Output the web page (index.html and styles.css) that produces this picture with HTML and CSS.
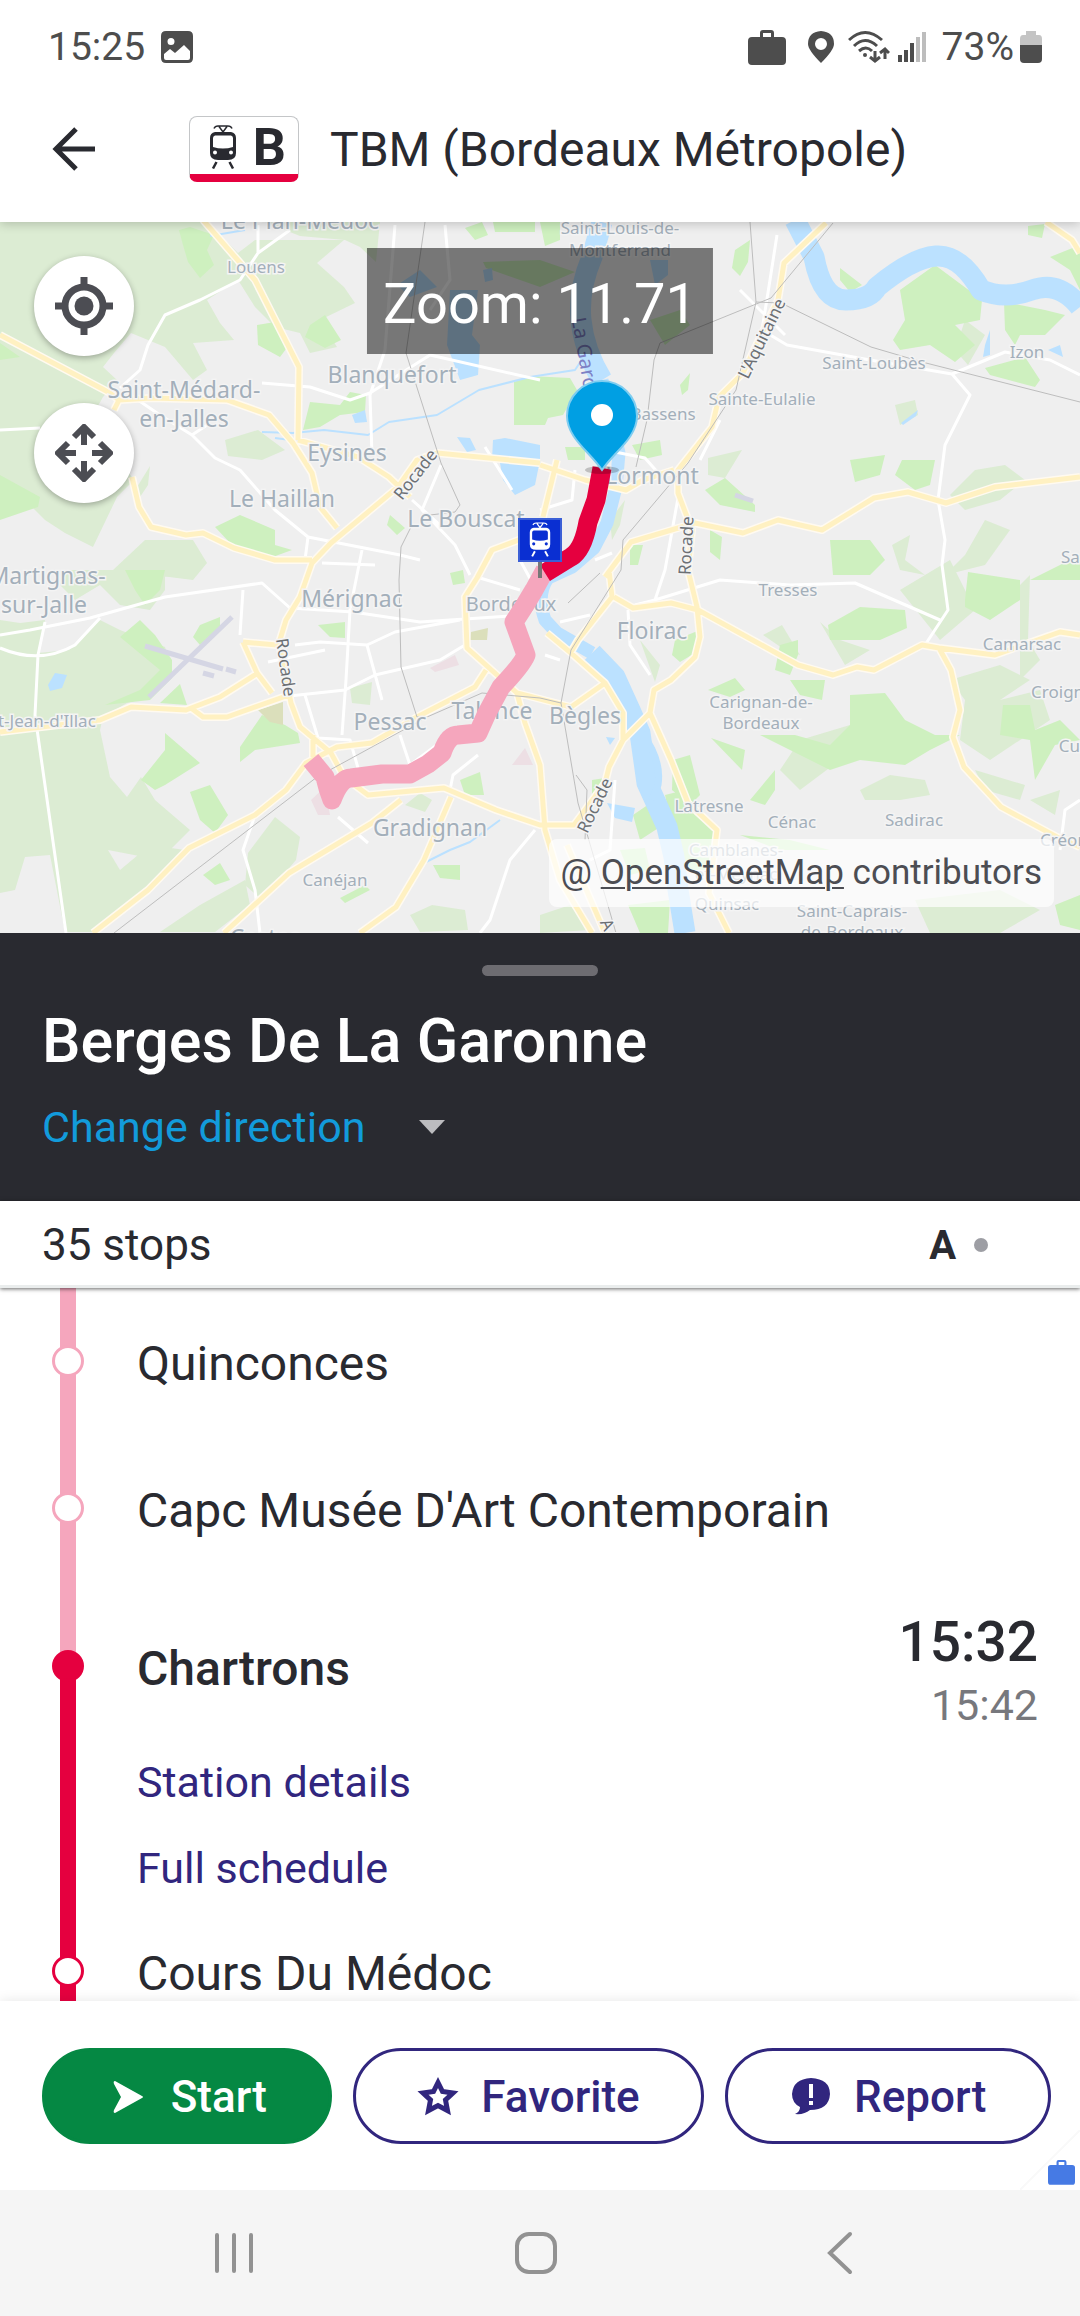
FILE: index.html
```html
<!DOCTYPE html>
<html lang="en">
<head>
    <meta charset="UTF-8">
    <meta name="viewport" content="width=device-width, initial-scale=1.0">
    <title>TBM (Bordeaux Métropole) - Line B</title>
    <link rel="stylesheet" href="styles.css">
</head>
<body>

    <!-- Shared shapes -->
    <svg class="sprite" aria-hidden="true">
        <symbol id="tram" viewBox="0 0 28 44">
            <path d="M5 3.500Q6 1 9 1H19Q22 1 23 3.500M10 1.500L14 7 18 1.500" fill="none" stroke="currentColor" stroke-width="1.500"/>
            <path fill="currentColor" fill-rule="evenodd" d="M6 7H22Q27 8 27 13V28Q27 35 19 35H9Q1 35 1 28V13Q1 8 6 7ZM6 10.500Q4 11 4 13V22Q14 25 24 22V13Q24 11 22 10.500ZM6 25.500A2 2 0 1 0 6 29.500 2 2 0 1 0 6 25.500ZM22 25.500A2 2 0 1 0 22 29.500 2 2 0 1 0 22 25.500Z"/>
            <path d="M7.500 37L4 43.500M20.500 37L24 43.500" stroke="currentColor" stroke-width="2.500"/>
        </symbol>
        <symbol id="briefcase" viewBox="0 0 38 36">
            <path fill="currentColor" fill-rule="evenodd" d="M4 8H12V4Q12 1 15 1H23Q26 1 26 4V8H34Q38 8 38 12V32Q38 36 34 36H4Q0 36 0 32V12Q0 8 4 8ZM15 8H23V4H15Z"/>
        </symbol>
    </svg>

    <header class="top">
        <div class="status-bar">
            <span>15:25</span>
            <svg class="picture-icon" viewBox="0 0 32 32"><path fill="currentColor" fill-rule="evenodd" d="M5 0H27Q32 0 32 5V27Q32 32 27 32H5Q0 32 0 27V5Q0 0 5 0ZM10 7A3.500 3.500 0 1 0 10 14 3.500 3.500 0 1 0 10 7ZM3 23V27Q3 29 5 29H27Q29 29 29 27V20L23 14 14 22 9 18Z"/></svg>
            <div class="status-right">
                <svg class="work-icon"><use href="#briefcase"/></svg>
                <svg class="place-icon" viewBox="0 0 26 32"><path fill="currentColor" fill-rule="evenodd" d="M13 0Q26 1 26 13 26 19 13 32 0 19 0 13 0 1 13 0ZM13 7A6 6 0 1 0 13 19 6 6 0 1 0 13 7Z"/></svg>
                <svg class="wifi-icon" viewBox="0 0 42 34"><g fill="none" stroke="currentColor" stroke-width="3"><path d="M1 10Q17-5 34 10M6 16Q17 5 29 16M11 21Q18 15 24 21M27 21V31M22 27L27 31 32 27M37 29V19M32 23L37 19 41 23"/></g><circle cx="17" cy="25" r="2" fill="currentColor"/></svg>
                <svg class="signal-icon" viewBox="0 0 28 32"><path d="M2 24V31M8 19V31M14 12V31" stroke="currentColor" stroke-width="4"/><path d="M20 6V31M26 1V31" stroke="#bdbdbd" stroke-width="4"/></svg>
                <span>73%</span>
                <svg class="battery-icon" viewBox="0 0 22 32"><path d="M6 0H16V4H19Q22 4 22 8V14H0V8Q0 4 3 4H6Z" fill="#c4c4c4"/><path d="M0 14H22V28Q22 32 18 32H4Q0 32 0 28Z" fill="currentColor"/></svg>
            </div>
        </div>
        <div class="title-bar">
            <button class="back" aria-label="Back">
                <svg viewBox="0 0 44 44"><path d="M43 22H4M24 2L4 22 24 42" fill="none" stroke="currentColor" stroke-width="5"/></svg>
            </button>
            <div class="line-badge">
                <svg><use href="#tram"/></svg>
                <b>B</b>
            </div>
            <h1>TBM (Bordeaux Métropole)</h1>
        </div>
    </header>

    <section class="map">
        <svg class="map-canvas" viewBox="0 222 1080 711" preserveAspectRatio="xMidYMid slice">
            <!-- Woods -->
            <path class="wood" d="M0 222H207L238 253 255 240 344 240 317 263 344 287 355 303 320 320 337 347 310 353 300 333 275 327 255 307 238 280 207 300 220 323 234 340 193 343 207 370 193 380 165 347 131 333 114 353 103 367 117 380 103 397 90 420 134 480 117 497 93 547 65 533 45 520 25 500 0 480ZM265 222H380L376 262 360 247 345 240 300 236ZM225 440L258 430 285 450 262 460 228 456ZM134 492L150 466 148 485 138 500ZM0 620L20 623 45 620 38 653 69 650 100 620 120 630 165 647 172 670 148 697 127 703 103 717 100 730 110 777 127 797 141 777 155 800 190 830 160 860 108 850 120 870 150 845 185 850 148 890 120 910 93 932 65 932 50 855 25 857 15 890 0 893ZM248 853L275 817 300 837 296 860 262 900 245 885ZM160 932L200 905 245 880 250 905 215 932ZM65 570H165V590L150 610 120 605 100 585 75 600 60 585ZM113 570L145 540 193 540 207 563 193 580ZM405 805L420 793 432 800 425 812ZM410 915L432 905 465 910 468 930 420 932ZM350 688L372 682 370 705 352 703Z"/>
            <path class="wood" d="M950 495L975 470 1005 465 1025 480 1000 500 965 510ZM965 555L985 520 1010 530 985 565 945 575ZM892 545L910 535 905 560 925 575 900 570ZM905 300L930 297 935 315 910 318ZM965 320L985 335 968 365 955 350ZM895 405L915 400 918 415 900 425ZM950 680L1000 665 1030 680 1000 700 1040 690 1050 720 990 760 960 740 965 700ZM860 790L890 775 925 780 930 795 900 800 865 800ZM975 770L1025 785 1020 800 985 790ZM1030 800L1060 790 1055 815ZM915 900L1000 890 1040 910 1000 933 930 933ZM763 635L782 625 800 655 785 650ZM640 640L660 665 655 682ZM820 622L840 640 870 650 845 665ZM780 770L800 740 850 725 840 760 800 790ZM1020 585L1030 575 1028 640 1040 660 1020 680ZM708 458L742 450 725 478 708 475ZM610 520L625 500 620 525 612 540ZM540 915L570 905 590 930 540 933ZM900 590L950 560 975 610 940 640Z"/>
            <!-- Parks -->
            <path class="park" d="M179 230L190 227 214 235 207 250 214 265 200 278 188 262 183 245ZM483 262L540 260 575 272 540 287 486 268ZM465 228L482 222 488 235 475 240ZM493 222H535V232H495ZM540 222H560V240L545 246ZM257 325L275 322 289 345 280 357 258 345ZM310 325L325 315 341 340 325 348 305 337ZM303 430L310 402 340 405 350 392 366 395 365 412 340 415 320 427ZM514 382L530 376 570 378 577 390 563 415 548 418 545 425 514 425ZM215 527L240 515 275 530 275 545 292 550 270 558 230 543ZM0 475L40 497 38 507 0 520ZM0 343L20 357 0 360ZM390 515L405 528 397 535 387 525ZM735 250L750 240 748 262 740 276 732 268ZM840 268L862 285 850 292 840 280ZM900 290L935 265 982 300 980 320 955 325 975 345 955 362 930 345 900 350 893 340 905 320ZM1004 302L1045 310 1065 315 1045 335 1020 335 1015 345 1005 330ZM1050 257L1080 245V290L1070 270ZM1028 226L1045 224 1042 238 1028 235ZM985 368L1025 357 1040 380 1035 387 990 375ZM680 385L690 373 688 390 682 395ZM705 490L725 478 755 505 755 512 720 505ZM850 460L885 455 880 475 855 482ZM902 460L935 460 930 485 915 490 895 475ZM632 445L660 440 662 455 640 460ZM830 540L870 540 885 560 870 575 833 575ZM1030 580L1080 555V580ZM710 530L722 537 720 560 710 552ZM630 545H643L638 565H630ZM650 320L680 310 690 325 665 345ZM565 447H585V460H568Z"/>
            <path class="park" d="M120 637L140 620 155 635 172 660 172 678 150 700 105 705 140 690 160 670ZM193 637L200 625 220 617 220 627 200 645ZM160 703L180 684 187 705ZM240 747L262 715 285 725 298 733 300 743 255 750 240 762ZM141 780L165 750 165 733 200 763 165 785 155 790ZM190 792L210 785 228 815 215 833 200 820ZM460 780L480 772 484 795 465 795ZM203 875L220 863 230 880 215 885ZM433 865L460 865 460 880 440 878ZM340 898L365 885 370 890 345 903ZM125 570H165L160 590 145 605 135 590ZM318 625L345 622 345 638 330 637ZM450 573L463 570 465 583 453 585ZM675 640L700 630 700 650 680 662 672 655ZM828 625L860 607 905 610 907 628 880 640 830 640ZM965 600L968 572 1020 580 1020 600 990 620 965 607ZM780 645L798 640 798 655 790 675 775 670ZM708 690L735 678 745 690 730 697ZM790 680L825 680 822 700 800 695ZM850 695L885 693 905 720 935 735 960 735 930 750 905 765 860 760 830 770 760 735 795 735 830 745 850 725ZM750 800L775 770 775 790 765 805ZM1003 705L1030 705 1035 730 1060 720 1080 740 1055 745 1035 780 1030 740 1000 735ZM711 738L745 750 742 770ZM673 760L690 755 700 795 690 805 672 790ZM665 795L685 790 695 815 715 830 715 870 690 870 675 840ZM633 815L655 800 663 825 640 840ZM628 905L670 900 668 933 640 933ZM1055 905L1080 895V930L1060 925ZM740 835L790 840 830 850 780 850ZM592 780L605 778 600 805 592 800ZM620 850L645 848 650 870 630 875Z"/>
            <path class="quarter" d="M430 668L455 655 459 665 435 672ZM311 800L325 787 330 815 318 815ZM512 765L525 748 533 765Z"/>
            <path class="field" d="M471 632L488 628 487 640 470 640ZM258 710L283 702 283 725 270 722Z"/>
            <path class="runway" d="M145 646L223 669M149 697L232 617M226 669L236 672M203 673L214 676M735 495L753 501"/>

            <!-- Water -->
            <path class="river wide" d="M795 220L814 257Q822 300 846 300T877 287Q912 258 936 256T981 290Q1005 300 1032 290T1080 307"/>
            <path class="river wide" d="M602 222L592 257Q578 290 581 320T602 380"/>
            <path class="river" d="M602 380L619 453 616 487 607 523 594 548 572 567 548 578Q536 595 545 620L557 633 592 653"/>
            <path class="river wide" d="M592 653L615 677 630 710 640 733 647 783 667 827 674 857 678 890 685 933"/>
            <path class="stream wide" d="M642 733Q662 760 658 785L652 800"/>
            <path class="stream" d="M262 432L293 433 324 430 368 435 389 422 437 415 479 390 530 377 575 370 585 355M426 862L450 850 470 842 500 820M210 236L245 230M275 438L290 440"/>
            <path class="water" d="M450 290H478L472 335 480 345 478 375 460 380 447 345ZM397 285L420 270 437 287 410 297ZM483 270L492 268 493 280 485 282ZM493 440L505 438 540 445 540 460 535 485 515 495 503 480 500 463 492 460ZM457 437L470 438 476 450 467 452ZM352 415L365 410 367 422 355 423ZM48 685L55 673 67 675 62 688 50 691ZM607 803L635 808 632 822 615 818ZM985 345L990 330 990 355 983 357ZM1048 350L1060 345 1063 357ZM901 423L918 410 916 416 903 425ZM606 737L615 738 610 745ZM650 260H668V275L655 285Z"/>

            <!-- Small roads -->
            <path class="street" d="M258 225L258 253 240 280 200 300 165 315 148 345 140 370 120 388M258 253L290 230M395 225L385 350 370 395 372 455M445 225L450 280 430 310M262 383L310 387 350 400 370 393 430 355 540 380M0 430L40 428M135 398L160 415 192 435 215 458 240 470 275 510 308 537 400 555 420 560M192 435L207 425M308 537L305 560M322 563L375 565M362 550L358 570 350 610 346 680 342 735M441 465L422 510 455 545 470 575M485 447L512 490"/>
            <path class="street" d="M0 635L30 630 90 618 165 597 262 583 290 608 353 612 420 622 510 616M0 648Q40 665 75 645L100 618M45 622L38 655 35 715 66 933M243 590L240 635M295 645L320 642 367 645 395 632 460 620M268 662L325 650M280 697L345 690 375 675 440 660 465 645M367 645L382 700M305 695L318 738 350 740 360 775M400 735L410 765 450 735M255 815L243 850 255 890 260 933M338 817L368 843M478 755L453 775 450 790M535 830L510 860 490 920 480 933M480 578L520 590M412 500L440 525M540 597L520 560"/>
            <path class="street" d="M777 235L770 280 762 330 787 345 870 360 952 374M952 374L970 395 945 445 938 500 945 540 942 565 948 610 925 645M952 374L1005 352 1050 360 1080 375M678 498L665 570 655 600 635 605M595 560L612 553M655 600L720 580 790 585 855 583 940 620M628 610L630 645 650 675M1080 800L1065 810 1060 850M700 460L720 420M605 450L645 458 660 475M560 622L590 615M615 780L610 850 590 860M545 655L560 660M740 290L785 335M540 510L572 500 575 470"/>

            <!-- Main roads -->
            <g class="road-casing"><use href="#main-roads"/></g>
            <g class="road"><path id="main-roads" d="M203 220L255 280 299 367 298 440M0 335L110 393 119 400 114 410M132 477L139 507 151 527 186 535 203 533 234 548 275 560 312 560M119 400L151 398 227 400 269 415 293 443 312 473 320 507 337 528M298 440L358 457 389 477 410 497M540 463L437 453 417 460 398 487 331 543 312 563 300 597 286 620 279 643 291 703 300 727 331 753 344 777 368 795 444 788 496 810 540 825 574 825 605 783 609 767 623 740 650 713 654 690 671 680 695 657 700 637 697 607 688 570 692 530 678 493 678 470 712 427 719 397 743 373 778 300 784 263 826 223M605 577L631 542 695 523 743 533 778 520 822 530 874 498 908 492 946 503 995 487 1080 477M614 597L633 608 671 603 698 610 798 665 833 675 857 667 874 670 922 645 939 648 995 655 1060 632 1080 635M939 648L951 670 960 710 953 737 964 767 1001 807 1057 837 1080 847M650 713L671 760 688 803 717 830 709 893 729 933M0 732L100 720 131 707 186 710 220 697 258 673 M243 642L257 673 272 693M243 642L277 645M191 708L203 717 227 717 289 695M93 933L148 890 189 848 255 815 286 790 306 763 337 747 372 743 417 717 475 687 486 670M313 757V735M224 933L289 873 372 823 401 800M360 933L396 907 424 860 451 797M540 532L492 550 477 578 465 597 467 648 517 693 525 723 540 765 545 830 560 880 592 933M547 633L571 653 605 683 623 713 623 740M605 683L571 707 517 693M540 465L585 480 626 490 643 480 674 470M557 460L543 517M1046 222L1072 240 1080 253M609 570L612 597 578 640 571 652M567 845L605 933"/></g>

            <!-- Railways -->
            <path class="rail" d="M425 222L406 353 441 463 460 505 455 512 430 515M412 525L401 547 399 580 401 667 417 717 427 717M114 933L317 777 427 717 482 693 540 698 561 703M750 222L756 302 736 390 688 463 623 540 621 570 571 650 561 703 578 803 616 933M833 223L771 298 660 343 654 360 647 420 636 467M756 302L781 303 871 347 922 362 1080 402M576 775L587 790 585 840M568 603L600 573"/>

            <!-- Place names -->
            <g class="town">
                <text x="300" y="229">Le Plan-Médoc</text>
                <text x="184" y="398">Saint-Médard-</text>
                <text x="184" y="427">en-Jalles</text>
                <text x="392" y="383">Blanquefort</text>
                <text x="347" y="461">Eysines</text>
                <text x="282" y="507">Le Haillan</text>
                <text x="466" y="527">Le Bouscat</text>
                <text x="47" y="584">Martignas-</text>
                <text x="44" y="613">sur-Jalle</text>
                <text x="352" y="607">Mérignac</text>
                <text x="390" y="730">Pessac</text>
                <text x="492" y="719">Talence</text>
                <text x="430" y="836">Gradignan</text>
                <text x="652" y="484">Lormont</text>
                <text x="652" y="639">Floirac</text>
                <text x="585" y="724">Bègles</text>
                <text x="265" y="946">Cestas</text>
            </g>
            <g class="city">
                <text x="511" y="611">Bordeaux</text>
            </g>
            <g class="village">
                <text x="256" y="273">Louens</text>
                <text x="30" y="727">Saint-Jean-d'Illac</text>
                <text x="335" y="886">Canéjan</text>
                <text x="620" y="234">Saint-Louis-de-</text>
                <text x="620" y="256">Montferrand</text>
                <text x="663" y="420">Bassens</text>
                <text x="762" y="405">Sainte-Eulalie</text>
                <text x="874" y="369">Saint-Loubès</text>
                <text x="1027" y="358">Izon</text>
                <text x="1103" y="563">Salleboeuf</text>
                <text x="788" y="596">Tresses</text>
                <text x="1022" y="650">Camarsac</text>
                <text x="1068" y="698">Croignon</text>
                <text x="761" y="708">Carignan-de-</text>
                <text x="761" y="729">Bordeaux</text>
                <text x="1087" y="752">Cursan</text>
                <text x="709" y="812">Latresne</text>
                <text x="792" y="828">Cénac</text>
                <text x="914" y="826">Sadirac</text>
                <text x="1064" y="846">Créon</text>
                <text x="736" y="856">Camblanes-</text>
                <text x="736" y="880">et-Meynac</text>
                <text x="727" y="910">Quinsac</text>
                <text x="852" y="917">Saint-Caprais-</text>
                <text x="852" y="938">de-Bordeaux</text>
            </g>
            <g class="road-name">
                <text transform="translate(420 478) rotate(-52)">Rocade</text>
                <text transform="translate(280 668) rotate(82)">Rocade</text>
                <text transform="translate(692 546) rotate(-87)">Rocade</text>
                <text transform="translate(600 808) rotate(-64)">Rocade</text>
                <text transform="translate(767 341) rotate(-64)">L'Aquitaine</text>
                <text transform="translate(607 938) rotate(65)">A 62</text>
                <text class="river-name" transform="translate(581 372) rotate(80)">La Garonne</text>
            </g>

            <!-- Line B -->
            <path class="route past" d="M311 760L325 777Q328 790 332 800Q340 778 351 778L382 774 410 774 428 764 442 753Q448 735 458 735L478 733 487 713 501 687Q522 665 526 655L514 622 525 605 534 590 545 570"/>
            <path class="route" d="M602 468L596 500 588 522Q583 550 571 557L545 573"/>

            <!-- Pin and station -->
            <ellipse cx="602" cy="470" rx="17" ry="4" fill="#000" opacity=".2"/>
            <path d="M602 470C590 452 567 438 567 416A35 35 0 0 1 637 416C637 438 614 452 602 470Z" fill="#009fe3" stroke="#7fcdf0" stroke-width="2"/>
            <circle cx="602" cy="415" r="11" fill="#fff"/>
            <path d="M540 562V578" stroke="#777" stroke-width="4"/>
            <rect x="519" y="519" width="42" height="42" fill="#0a2fd2" stroke="#3b5fd6" stroke-width="2"/>
            <use href="#tram" x="529" y="522" width="22" height="35" color="#fff"/>
        </svg>

        <div class="map-buttons">
            <button aria-label="My location">
                <svg viewBox="0 0 58 58"><g fill="none" stroke="currentColor" stroke-width="7"><circle cx="29" cy="29" r="19"/><path d="M29 0V10M29 48V58M0 29H10M48 29H58"/></g><circle cx="29" cy="29" r="9.500" fill="currentColor"/></svg>
            </button>
            <button aria-label="Fit the whole line">
                <svg viewBox="0 0 58 58"><path d="M29 21V3M19 13L29 3 39 13M29 37V55M19 45L29 55 39 45M21 29H3M13 19L3 29 13 39M37 29H55M45 19L55 29 45 39" fill="none" stroke="currentColor" stroke-width="6"/></svg>
            </button>
        </div>
        <div class="zoom-level">Zoom: 11.71</div>
        <div class="attribution">@ <a href="#">OpenStreetMap</a> contributors</div>
    </section>

    <section class="direction">
        <div class="handle"></div>
        <h2>Berges De La Garonne</h2>
        <button class="change-direction">Change direction
            <svg viewBox="0 0 26 14"><path d="M0 0H26L13 14Z" fill="currentColor"/></svg>
        </button>
    </section>

    <div class="stops-bar">
        <span>35 stops</span>
        <span class="access"><b>A</b><i></i></span>
    </div>

    <ul class="stops">
        <li class="stop past">
            <div class="rail-line"><i></i></div>
            <div class="stop-head">Quinconces</div>
        </li>
        <li class="stop past">
            <div class="rail-line"><i></i></div>
            <div class="stop-head">Capc Musée D'Art Contemporain</div>
        </li>
        <li class="stop current">
            <div class="rail-line"><i></i></div>
            <div>
                <div class="stop-head">
                    <span>Chartrons</span>
                    <div class="times">
                        <time class="next">15:32</time>
                        <time>15:42</time>
                    </div>
                </div>
                <a href="#">Station details</a>
                <a href="#">Full schedule</a>
            </div>
        </li>
        <li class="stop">
            <div class="rail-line"><i></i></div>
            <div class="stop-head">Cours Du Médoc</div>
        </li>
    </ul>

    <footer class="actions">
        <button class="start">
            <svg viewBox="0 0 42 42"><path d="M8 5L35 20Q37 21 35 22L8 37Q6 37 7 34L14 21 7 8Q6 5 8 5Z" fill="currentColor"/></svg>
            Start
        </button>
        <button>
            <svg viewBox="0 0 42 42"><path d="M21 6.500L25.500 15.500 36 17 28.500 24 30.500 34.500 21 29.500 11.500 34.500 13.500 24 6 17 16.500 15.500Z" fill="none" stroke="currentColor" stroke-width="5"/></svg>
            Favorite
        </button>
        <button>
            <svg viewBox="0 0 42 42"><path d="M21 2Q40 3 40 18 39 34 20 34 14 39 5 38 10 36 10 31 2 27 2 18 3 3 21 2Z" fill="currentColor"/><path d="M21 8V22M21 25V29" stroke="#fff" stroke-width="4"/></svg>
            Report
        </button>
        <svg class="work-corner" viewBox="0 0 60 60"><path d="M0 60L60 0" stroke="#f9f9f9" stroke-width="2"/><use href="#briefcase" x="28" y="29" width="27" height="26"/></svg>
    </footer>

    <nav class="system-nav">
        <button aria-label="Recent apps"><svg viewBox="0 0 44 44"><path d="M5 4V40M22 4V40M39 4V40"/></svg></button>
        <button aria-label="Home"><svg viewBox="0 0 44 44"><rect x="3" y="3" width="38" height="38" rx="12"/></svg></button>
        <button aria-label="Back"><svg viewBox="0 0 44 44"><path d="M33 3L13 22 33 41"/></svg></button>
    </nav>

</body>
</html>
```
FILE: styles.css
```css
/* --- Colours --- */
:root {
    --ink: #292a30;
    --red: #e5003f;
    --pink: #f5a6bd;
    --purple: #31267e;
    --green: #058843;
}

* {
    margin: 0;
    padding: 0;
    box-sizing: border-box;
}

body {
    display: flex;
    flex-direction: column;
    height: 100vh;
    font-family: Roboto, "Liberation Sans", sans-serif;
    font-size: 48px;
    color: var(--ink);
    background: #fff;
}

button {
    font: inherit;
    color: inherit;
    background: none;
    border: none;
    cursor: pointer;
}

.sprite {
    position: absolute;
    width: 0;
    height: 0;
}

/* --- Status bar and title --- */
.top {
    position: relative;
    z-index: 1;
    flex: none;
    box-shadow: 0 2px 10px rgba(0, 0, 0, 0.2);
    background: #fff;
}

.status-bar {
    display: flex;
    align-items: center;
    height: 92px;
    padding: 2px 38px 0 48px;
    font-size: 39px;
    color: #4d4d4d;
}

.status-right {
    display: flex;
    align-items: center;
    margin-left: auto;
}

.picture-icon { width: 32px; height: 32px; margin-left: 16px; }
.work-icon { width: 38px; height: 36px; margin-right: 22px; }
.place-icon { width: 26px; height: 32px; margin-right: 14px; }
.wifi-icon { width: 42px; height: 34px; margin-right: 8px; }
.signal-icon { width: 28px; height: 32px; margin-right: 16px; }
.battery-icon { width: 22px; height: 32px; margin-left: 6px; }

.title-bar {
    display: flex;
    align-items: center;
    height: 130px;
    padding: 0 52px 16px;
}

.back {
    width: 44px;
    height: 44px;
    margin-right: 93px;
}

.back svg {
    display: block;
}

.line-badge {
    display: flex;
    align-items: center;
    justify-content: space-between;
    width: 110px;
    height: 66px;
    padding: 2px 12px 0 19px;
    border: 1px solid #c4c6c8;
    border-bottom: 8px solid var(--red);
    border-radius: 8px;
    font-size: 52px;
    line-height: 56px;
}

.line-badge svg {
    width: 28px;
    height: 44px;
}

.line-badge b {
    padding-top: 2px;
}

.title-bar h1 {
    margin-left: 31px;
    font-size: 48px;
    font-weight: 400;
}

/* --- Map --- */
.map {
    position: relative;
    flex: none;
    aspect-ratio: 1080 / 711;
    overflow: hidden;
    background: #efefef;
}

.map-canvas {
    display: block;
    width: 100%;
    height: 100%;
}

.wood { fill: #dcecd3; }
.park { fill: #cef0bf; }
.quarter { fill: #eddfe4; }
.field { fill: #dbdfbb; }
.water { fill: #bbe1ff; }
.runway { fill: none; stroke: #d5d6e4; stroke-width: 5; }
.river, .stream { fill: none; stroke: #bbe1ff; stroke-width: 13; stroke-linejoin: round; }
.river.wide { stroke-width: 21; }
.stream { stroke-width: 2; }
.stream.wide { stroke-width: 7; }
.street { fill: none; stroke: #fff; stroke-width: 3; stroke-linejoin: round; }
.road, .road-casing { fill: none; stroke: #fff1c2; stroke-width: 5; stroke-linejoin: round; }
.road-casing { stroke: #fffaf0; stroke-width: 8; }
.rail { fill: none; stroke: #bdbdbd; stroke-width: 1; }

.town, .city, .village, .road-name {
    font-family: "Noto Sans", sans-serif;
    font-size: 23px;
    fill: #a3afba;
    stroke: #f4f4f4;
    stroke-width: 3;
    paint-order: stroke;
    text-anchor: middle;
}

.city { font-size: 20px; }
.village { font-size: 17px; }
.road-name { font-size: 17px; fill: #6c7074; }
.river-name { font-size: 20px; fill: #7d80c4; stroke: none; }

.route {
    fill: none;
    stroke: var(--red);
    stroke-width: 19;
    stroke-linejoin: round;
}

.route.past {
    stroke: var(--pink);
}

.map-buttons {
    position: absolute;
    top: 34px;
    left: 34px;
    display: grid;
    gap: 47px;
}

.map-buttons button {
    display: grid;
    place-items: center;
    width: 100px;
    height: 100px;
    border-radius: 50%;
    background: #fff;
    color: #4c4d53;
    box-shadow: 0 2px 6px rgba(0, 0, 0, 0.3);
}

.map-buttons svg {
    width: 58px;
    height: 58px;
}

.zoom-level {
    position: absolute;
    top: 26px;
    left: 50%;
    transform: translateX(-50%);
    padding: 6px 16px 0;
    background: rgba(0, 0, 0, 0.5);
    color: #fff;
    font-size: 56px;
    line-height: 100px;
    white-space: nowrap;
}

.attribution {
    position: absolute;
    right: 26px;
    bottom: 26px;
    padding: 0 12px;
    border-radius: 8px;
    background: rgba(255, 255, 255, 0.7);
    color: #4c4d53;
    font-size: 35px;
    line-height: 68px;
}

.attribution a {
    color: inherit;
    text-decoration-thickness: 2px;
    text-underline-offset: 3px;
}

/* --- Direction panel --- */
.direction {
    flex: none;
    padding: 32px 42px 29px;
    background: var(--ink);
    color: #fff;
}

.handle {
    width: 116px;
    height: 11px;
    margin: 0 auto 27px;
    border-radius: 6px;
    background: #6d6c71;
}

.direction h2 {
    font-size: 61px;
    font-weight: 500;
    line-height: 76px;
}

.change-direction {
    display: flex;
    align-items: center;
    gap: 54px;
    height: 93px;
    padding-top: 2px;
    color: #129bdb;
    font-size: 43px;
}

.change-direction svg {
    width: 26px;
    height: 14px;
    color: #bcbcbf;
}

/* --- Stops --- */
.stops-bar {
    position: relative;
    z-index: 1;
    flex: none;
    display: flex;
    align-items: center;
    justify-content: space-between;
    height: 87px;
    padding: 4px 92px 0 42px;
    border-bottom: 3px solid #eaeded;
    box-shadow: 0 1px 4px rgba(0, 0, 0, 0.6);
    background: #fff;
    font-size: 44px;
}

.access {
    display: flex;
    align-items: center;
    gap: 18px;
    font-size: 40px;
}

.access i {
    width: 14px;
    height: 14px;
    border-radius: 50%;
    background: #9d9ea4;
}

.stops {
    flex: 1;
    min-height: 0;
    padding-top: 13px;
    background: linear-gradient(var(--pink), var(--pink)) 60px 0 / 16px 13px no-repeat;
    list-style: none;
    overflow-y: auto;
    scrollbar-width: none;
}

.stop {
    --line: var(--red);
    display: grid;
    grid-template-columns: 32px 1fr;
    column-gap: 53px;
    padding: 0 42px 0 52px;
}

.stop.past {
    --line: var(--pink);
    min-height: 147px;
}

.rail-line {
    display: flex;
    flex-direction: column;
    align-items: center;
}

.rail-line::before, .rail-line::after {
    content: "";
    width: 16px;
    height: 47px;
    background: var(--line);
}

.rail-line::after {
    flex: 1;
}

.rail-line i {
    position: relative;
    width: 32px;
    height: 32px;
    margin: -3px 0;
    border: 3px solid var(--line);
    border-radius: 50%;
    background: #fff;
}

.current .rail-line::before {
    height: 58px;
    background: var(--pink);
}

.current .rail-line i {
    background: var(--red);
}

.stop-head {
    display: flex;
    align-items: center;
    justify-content: space-between;
    height: 124px;
}

.current .stop-head {
    height: 144px;
    padding-top: 2px;
    font-weight: 500;
}

.times {
    display: grid;
    padding-top: 6px;
    text-align: right;
    font-size: 43px;
    font-weight: 400;
    line-height: 58px;
    color: #77787d;
}

.times .next {
    font-size: 55px;
    font-weight: 500;
    line-height: 68px;
    color: var(--ink);
}

.stop a {
    display: block;
    width: fit-content;
    color: var(--purple);
    font-size: 43px;
    line-height: 86px;
    text-decoration: none;
}

/* --- Bottom buttons --- */
.actions {
    position: relative;
    flex: none;
    display: flex;
    gap: 21px;
    padding: 47px 29px 46px 42px;
    background: #fff;
    box-shadow: 0 0 12px rgba(0, 0, 0, 0.1);
}

.actions button {
    display: flex;
    flex: auto;
    align-items: center;
    justify-content: center;
    gap: 22px;
    height: 96px;
    padding-top: 2px;
    border: 3px solid var(--purple);
    border-radius: 48px;
    color: var(--purple);
    font-size: 44px;
    font-weight: 500;
}

.actions .start {
    border-color: var(--green);
    background: var(--green);
    color: #fff;
}

.actions button svg {
    width: 42px;
    height: 42px;
}

.work-corner {
    position: absolute;
    right: 0;
    bottom: 0;
    width: 60px;
    height: 60px;
    color: #467ae4;
}

/* --- System navigation --- */
.system-nav {
    position: relative;
    flex: none;
    display: grid;
    grid-template-columns: repeat(3, 1fr);
    height: 126px;
    padding: 0 90px 0 83px;
    background: #f5f5f5;
}

.system-nav button {
    display: grid;
    place-items: center;
}

.system-nav svg {
    width: 44px;
    height: 44px;
    fill: none;
    stroke: #929292;
    stroke-width: 4;
    stroke-linecap: round;
}
```
